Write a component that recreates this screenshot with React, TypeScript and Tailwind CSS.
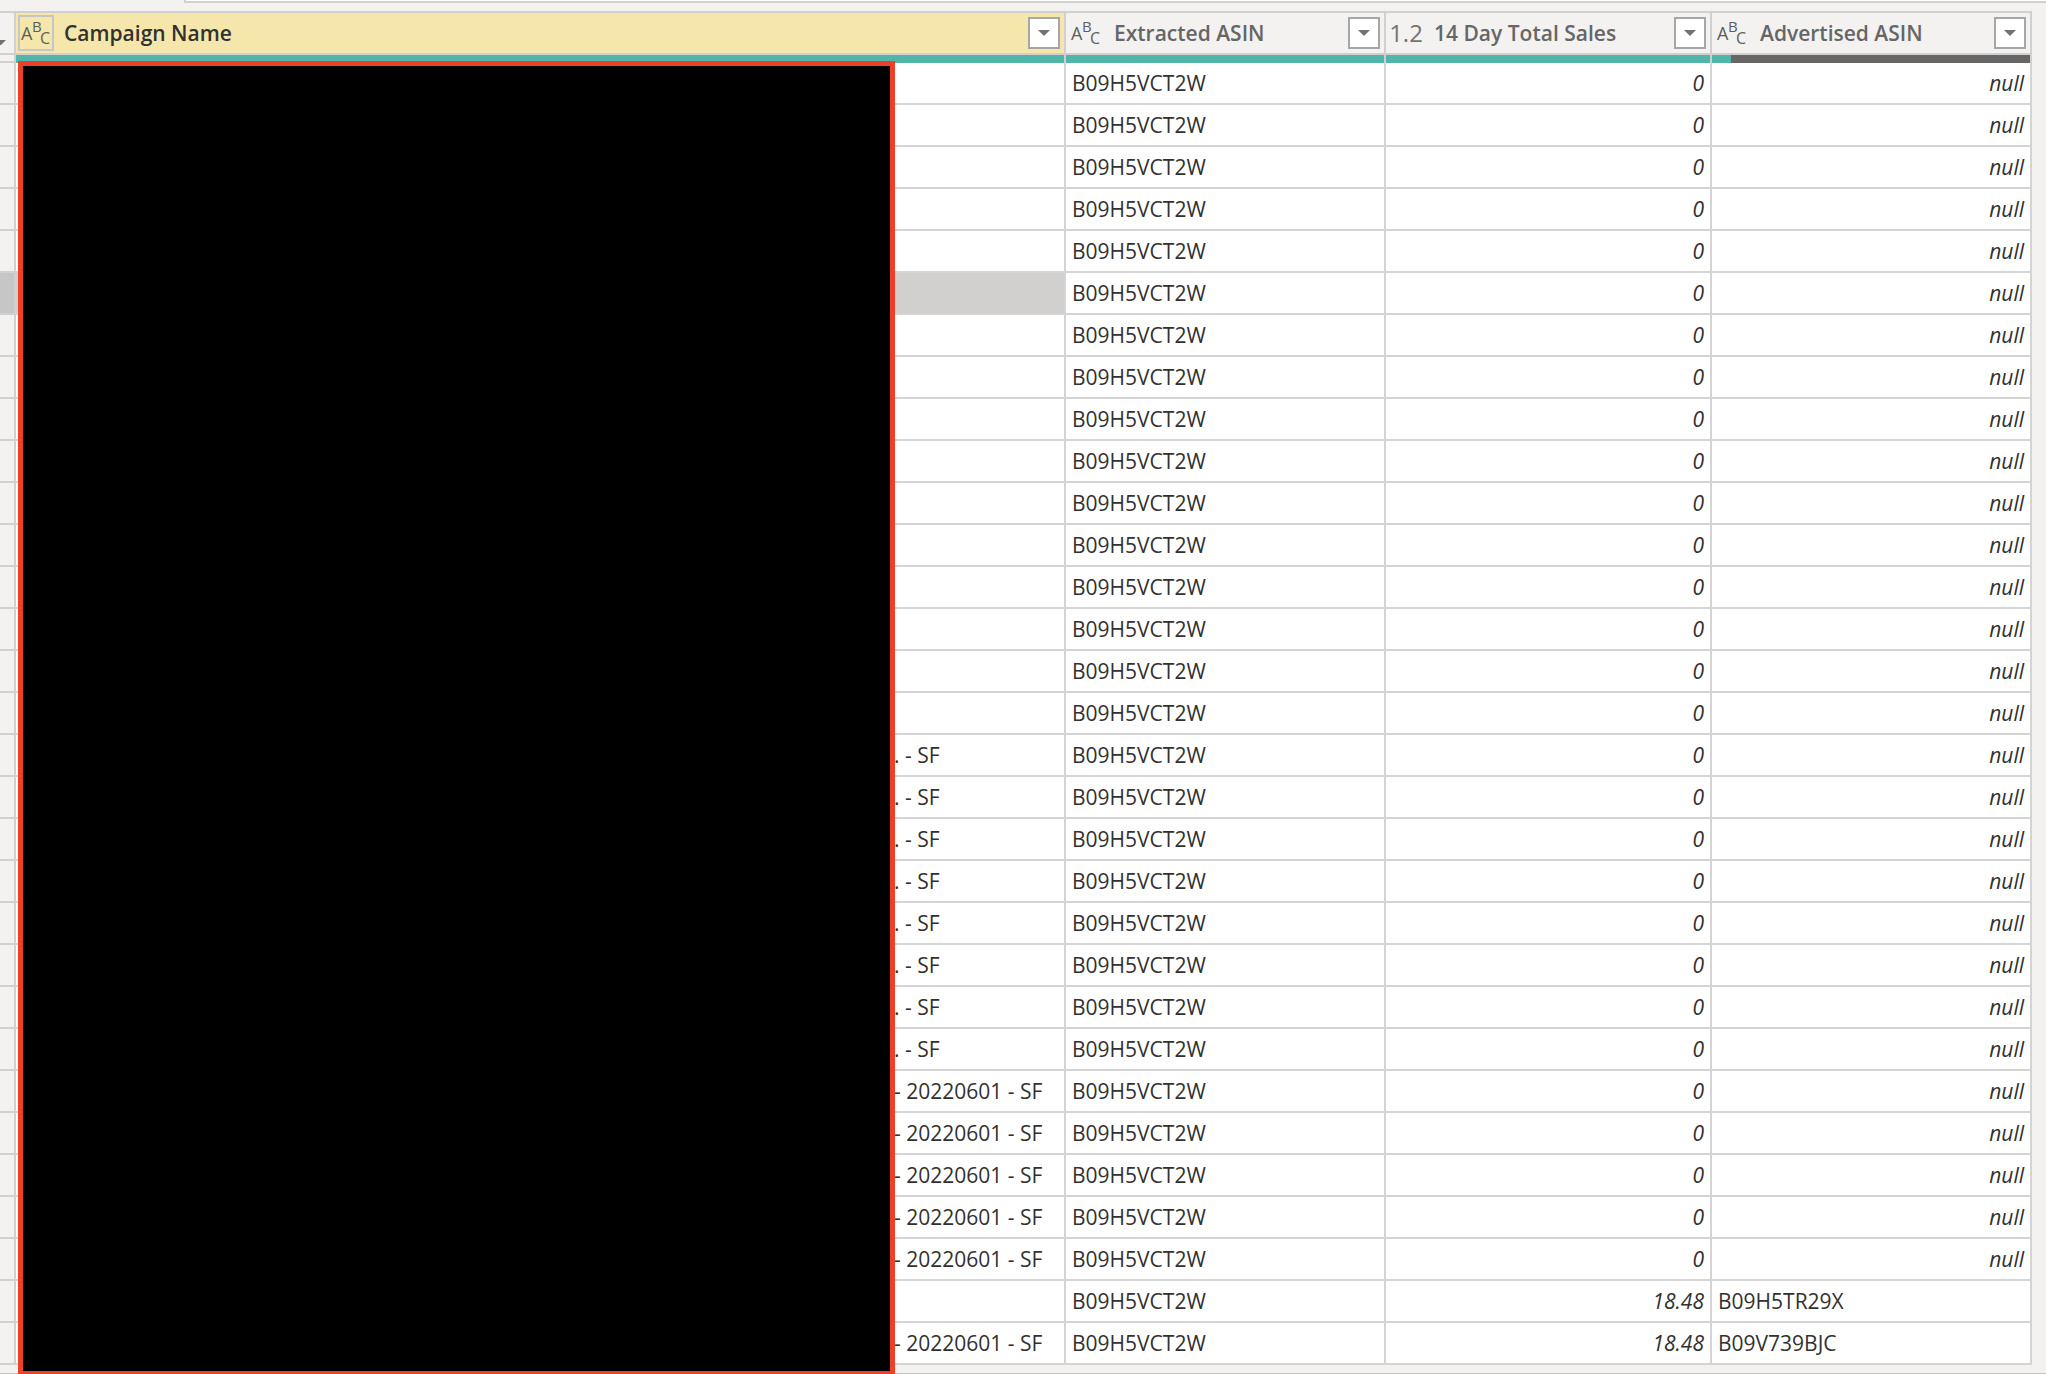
import React, { useState } from "react";
import { clsx } from "clsx";

type ColumnType = "text" | "decimal";

interface Column {
    id: string;
    title: string;
    type: ColumnType;
    filled: number;
}

interface Row {
    campaign: string;
    extracted: string;
    sales: string;
    advertised: string | null;
}

const columns: Column[] = [
    { id: "campaign", title: "Campaign Name", type: "text", filled: 100 },
    { id: "extracted", title: "Extracted ASIN", type: "text", filled: 100 },
    { id: "sales", title: "14 Day Total Sales", type: "decimal", filled: 100 },
    { id: "advertised", title: "Advertised ASIN", type: "text", filled: 6 },
];

const emptySales = (count: number, campaign: string): Row[] =>
    Array.from({ length: count }, () => ({
        campaign,
        extracted: "B09H5VCT2W",
        sales: "0",
        advertised: null,
    }));

const rows: Row[] = [
    ...emptySales(16, ""),
    ...emptySales(8, ". - SF"),
    ...emptySales(5, "- 20220601 - SF"),
    { campaign: "", extracted: "B09H5VCT2W", sales: "18.48", advertised: "B09H5TR29X" },
    { campaign: "- 20220601 - SF", extracted: "B09H5VCT2W", sales: "18.48", advertised: "B09V739BJC" },
];

function TypeIcon({ type }: { type: ColumnType }) {
    if (type === "decimal") {
        return <span className="text-[24px] leading-8 font-medium text-[#737271]">1.2</span>;
    }
    return (
        <svg viewBox="0 0 32 32" className="w-8 h-8 shrink-0 fill-[#605e5c] font-medium" aria-hidden="true">
            <text x="1" y="23" fontSize="18">A</text>
            <text x="12" y="15" fontSize="15">B</text>
            <text x="20" y="27" fontSize="16">C</text>
        </svg>
    );
}

function ColumnHeader({
    column,
    selected,
    onSelect,
}: {
    column: Column;
    selected: boolean;
    onSelect: () => void;
}) {
    return (
        <th
            scope="col"
            className={clsx(
                "h-11 p-0 border-y-2 border-r-2 border-[#d2d0ce] text-left",
                selected ? "bg-[#f5e7ab] text-[#323130]" : "bg-[#f3f2f1] text-[#666666]"
            )}
        >
            <div className="flex items-center h-10 pl-0.5 pr-1">
                <button
                    type="button"
                    aria-label={`Change type of ${column.title}`}
                    className={clsx(
                        "flex items-center justify-center w-9 h-9 shrink-0 border-2 font-normal",
                        selected ? "border-[#c8c6c4]" : "border-transparent"
                    )}
                >
                    <TypeIcon type={column.type} />
                </button>
                <button
                    type="button"
                    onClick={onSelect}
                    className="flex-1 pl-2.5 text-left text-[21px] leading-10 font-semibold whitespace-nowrap"
                >
                    {column.title}
                </button>
                <button
                    type="button"
                    aria-label={`Filter ${column.title}`}
                    className="flex items-center justify-center w-8 h-8 shrink-0 bg-white border-2 border-[#a6a6a6]"
                >
                    <svg viewBox="0 0 12 6" className="w-3 h-1.5 fill-[#737271]" aria-hidden="true">
                        <path d="M0 0h12L6 6z" />
                    </svg>
                </button>
            </div>
        </th>
    );
}

export default function App() {
    const [selectedColumn, setSelectedColumn] = useState("campaign");
    const [selectedRow, setSelectedRow] = useState(5);

    return (
        <div className="min-h-screen overflow-hidden bg-[#f3f2f1] text-[#323130] font-['Open_Sans','Noto_Sans',sans-serif]">
            {/* Lower edge of the formula bar */}
            <div className="pl-[184px] pb-2">
                <div className="h-[3px] bg-white border-l-2 border-b-2 border-[#d2d0ce]" />
            </div>

            <main className="relative pb-2 border-b border-[#c8c6c4]">
                <div className="pr-[14px]">
                    <table className="w-full table-fixed border-separate border-spacing-0 text-[21px] leading-10">
                        <colgroup>
                            <col className="w-4" />
                            <col />
                            <col className="w-[320px]" />
                            <col className="w-[326px]" />
                            <col className="w-[320px]" />
                        </colgroup>
                        <thead>
                            <tr>
                                <th className="p-0 border-y-2 border-r-2 border-[#d2d0ce]">
                                    <button type="button" aria-label="Table options" className="flex items-center w-full h-10 pt-[18px]">
                                        <svg viewBox="0 0 6 5" className="w-1.5 h-[5px] fill-[#737271]" aria-hidden="true">
                                            <path d="M0 0h6L1 5H0z" />
                                        </svg>
                                    </button>
                                </th>
                                {columns.map((column) => (
                                    <ColumnHeader
                                        key={column.id}
                                        column={column}
                                        selected={column.id === selectedColumn}
                                        onSelect={() => setSelectedColumn(column.id)}
                                    />
                                ))}
                            </tr>
                            {/* Column quality bars */}
                            <tr>
                                <td className="h-2 p-0 border-r-2 border-b-2 border-[#d2d0ce]" />
                                {columns.map((column) => (
                                    <td key={column.id} className="h-2 p-0 bg-[#666666] border-r-2 border-[#d2d0ce]">
                                        <div className="h-2 bg-[#51b5a9]" style={{ width: `${column.filled}%` }} />
                                    </td>
                                ))}
                            </tr>
                        </thead>
                        <tbody>
                            {rows.map((row, idx) => {
                                const active = idx === selectedRow;
                                return (
                                    <tr key={idx} onClick={() => setSelectedRow(idx)} className="bg-white">
                                        <td
                                            className={clsx(
                                                "h-[42px] p-0 border-r-2 border-b-2 border-[#d2d0ce]",
                                                active ? "bg-[#c6c6c6]" : "bg-[#f3f2f1]"
                                            )}
                                        />
                                        <td
                                            className={clsx(
                                                "p-0 pl-[878px] border-r-2 border-b-2 border-[#d4d4d4] whitespace-nowrap overflow-hidden",
                                                active && "bg-[#d2d0ce]"
                                            )}
                                        >
                                            {row.campaign}
                                        </td>
                                        <td className="p-0 pl-1.5 border-r-2 border-b-2 border-[#d4d4d4]">{row.extracted}</td>
                                        <td className="p-0 pr-1.5 border-r-2 border-b-2 border-[#d4d4d4] text-right italic">
                                            {row.sales}
                                        </td>
                                        <td
                                            className={clsx(
                                                "p-0 px-1.5 border-r-2 border-b-2 border-[#d4d4d4]",
                                                row.advertised === null && "text-right italic"
                                            )}
                                        >
                                            {row.advertised ?? "null"}
                                        </td>
                                    </tr>
                                );
                            })}
                        </tbody>
                    </table>
                </div>

                {/* Redaction over the campaign names */}
                <div className="absolute top-[50px] -bottom-[3px] left-[18px] w-[877px] bg-black border-[5px] border-[#ec4027]" />
            </main>
        </div>
    );
}
